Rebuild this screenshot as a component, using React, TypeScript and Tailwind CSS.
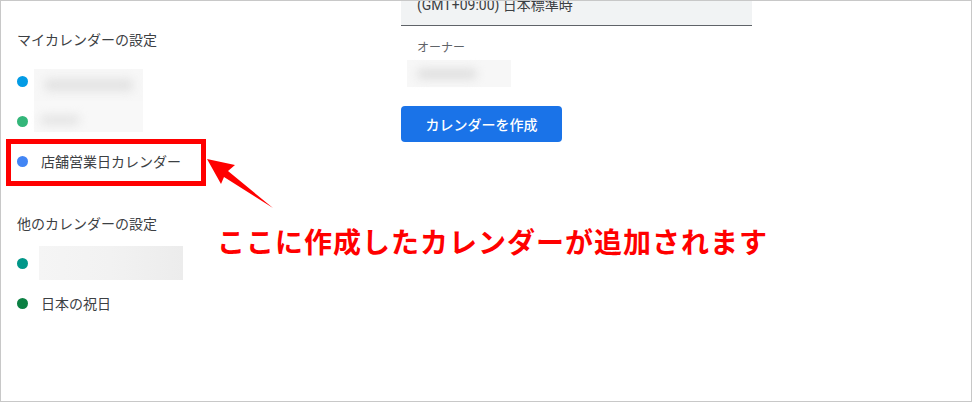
const font = { fontFamily: '"Noto Sans CJK JP", "Noto Sans", sans-serif' };

function Dot({ color }: { color: string }) {
  return <span className={`w-[11px] h-[11px] rounded-full shrink-0 ${color}`} />;
}

export default function App() {
  return (
    <div
      className="relative w-[972px] h-[402px] bg-white border border-[#c8c8c8] overflow-hidden flex text-[#3c4043]"
      style={font}
    >
      {/* 左カラム */}
      <div className="w-[400px] pl-[16px] pt-[28px] flex flex-col">
        <div className="text-[14px] leading-[20px]">マイカレンダーの設定</div>

        <div className="mt-[12px] h-[40px] flex items-center">
          <Dot color="bg-[#039be5]" />
          <div className="ml-[6px] self-end w-[109px] h-[32px] bg-[#f7f7f7] flex items-center pl-[10px]">
            <div className="w-[90px] h-[12px] rounded-full bg-[#e2e2e2] blur-[5px]" />
          </div>
        </div>
        <div className="h-[40px] flex items-center">
          <Dot color="bg-[#33b679]" />
          <div className="ml-[6px] self-start w-[109px] h-[31px] bg-[#f8f8f8] flex items-start pt-[14px] pl-[6px]">
            <div className="w-[40px] h-[10px] rounded-full bg-[#e4e4e4] blur-[5px]" />
          </div>
        </div>
        <div className="h-[40px] flex items-center gap-[13px]">
          <Dot color="bg-[#4285f4]" />
          <span className="text-[14px] leading-[20px]">店舗営業日カレンダー</span>
        </div>

        <div className="mt-[32px] text-[14px] leading-[20px]">他のカレンダーの設定</div>

        <div className="mt-[10px] h-[40px] flex items-center">
          <Dot color="bg-[#009688]" />
          <div className="ml-[11px] w-[144px] h-[34px] bg-gradient-to-r from-[#f5f5f5] via-[#f2f2f2] to-[#ececec]" />
        </div>
        <div className="h-[40px] flex items-center gap-[13px]">
          <Dot color="bg-[#0b8043]" />
          <span className="text-[14px] leading-[20px]">日本の祝日</span>
        </div>
      </div>

      {/* 右カラム */}
      <div className="flex flex-col">
        <div className="w-[351px] h-[25px] bg-[#f1f3f4] border-b border-[#5f6368] flex items-end pl-[16px] pb-[10px]">
          <span
            className="text-[14px] leading-[20px] text-[#3c4043]"
            style={{ fontFamily: 'Roboto, "Noto Sans CJK JP", sans-serif' }}
          >
            (GMT+09:00) 日本標準時
          </span>
        </div>
        <div className="mt-[13px] pl-[16px] text-[12px] leading-[16px] text-[#5f6368]">オーナー</div>
        <div className="mt-[5px] ml-[6px] w-[104px] h-[27px] bg-[#f7f7f7] flex items-center pl-[10px]">
          <div className="w-[60px] h-[10px] rounded-full bg-[#dedede] blur-[5px]" />
        </div>
        <button className="mt-[19px] w-[161px] h-[36px] rounded-[4px] bg-[#1a73e8] text-white text-[14px] font-medium">
          カレンダーを作成
        </button>
      </div>

      {/* 注釈 */}
      <div className="absolute left-[5px] top-[138px] w-[200px] h-[47px] border-[5px] border-[#ff0000]" />
      <svg className="absolute left-0 top-0" width="972" height="402">
        <polygon
          points="206,158 234,164 227,170 272,207 223,176 220,183"
          fill="#ff0000"
        />
      </svg>
      <div className="absolute left-[216px] top-[224px] text-[28px] leading-[32px] font-bold text-[#ff0000] tracking-[1px]">
        ここに作成したカレンダーが追加されます
      </div>
    </div>
  );
}
